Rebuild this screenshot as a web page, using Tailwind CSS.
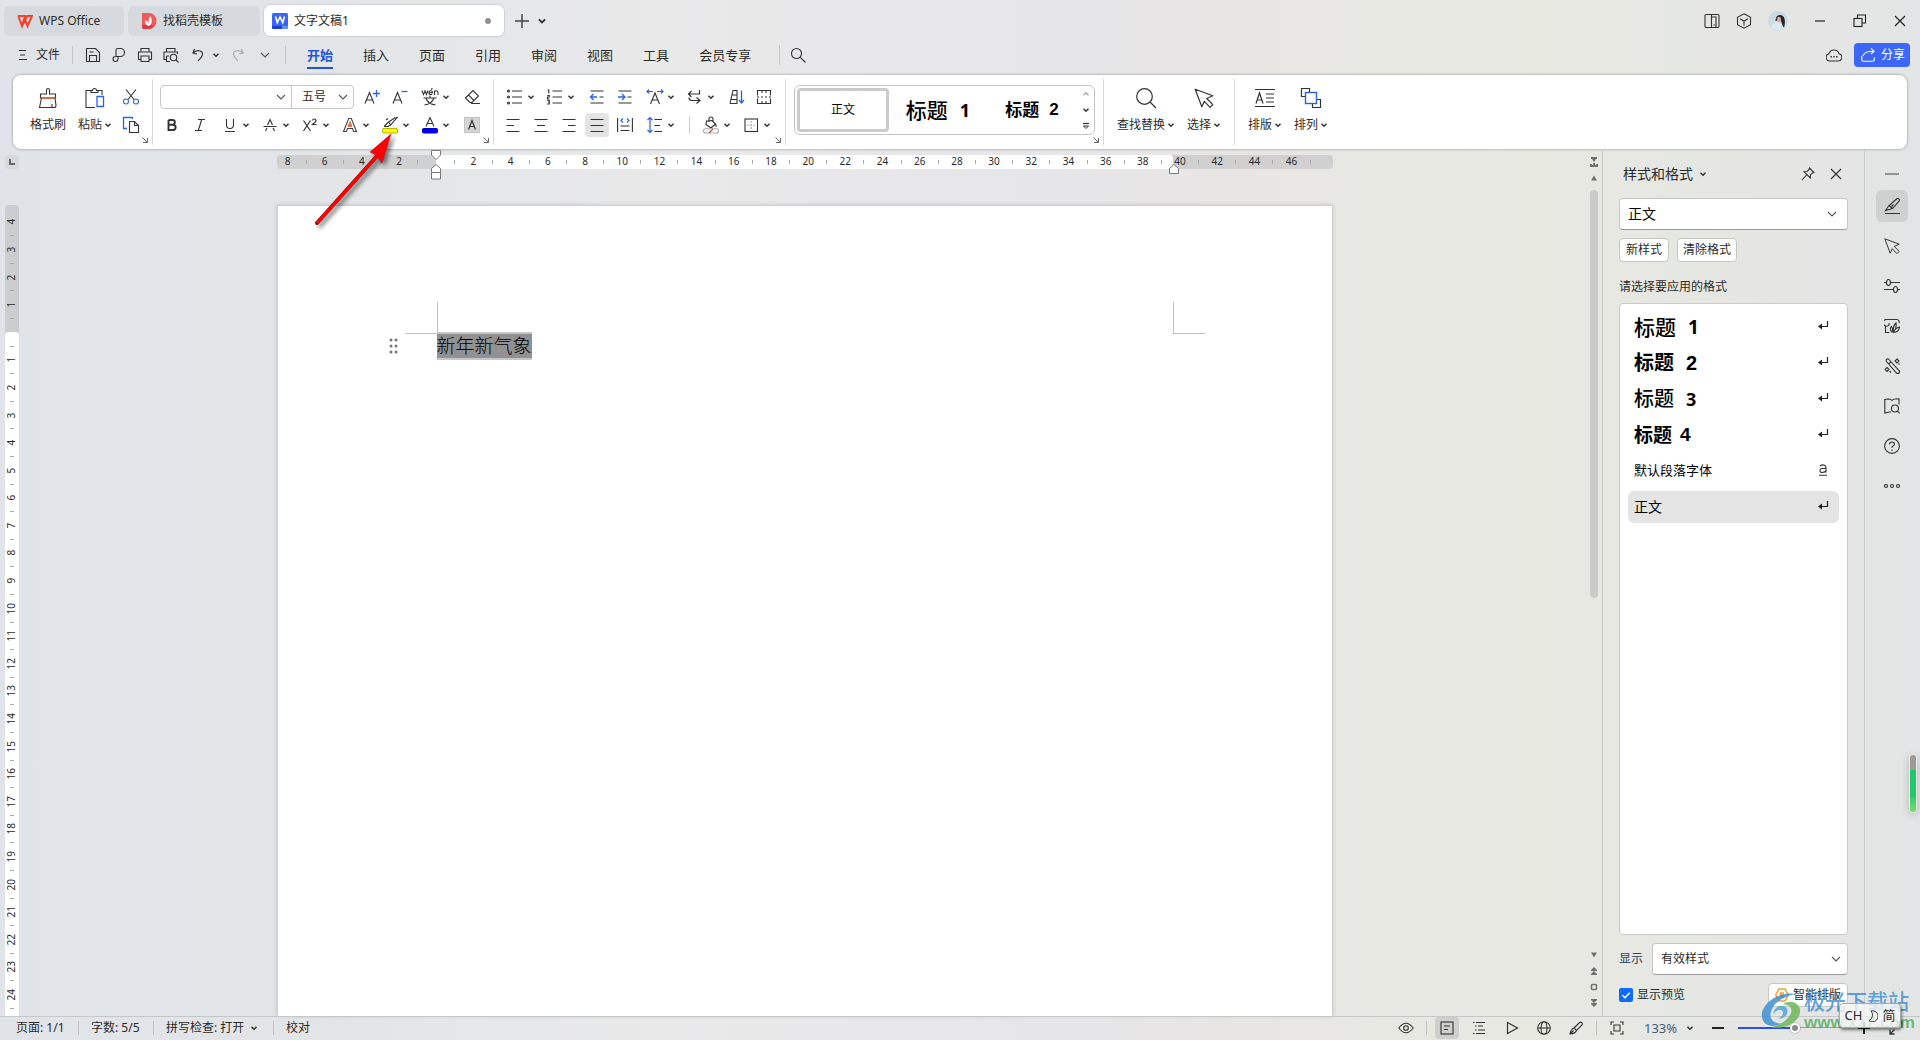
<!DOCTYPE html>
<html lang="zh-CN">
<head>
<meta charset="utf-8">
<meta name="viewport" content="width=device-width, initial-scale=1">
<title>文字文稿1 - WPS Office</title>
<script src="https://cdn.jsdelivr.net/npm/@tailwindcss/browser@4"></script>
</head>
<body class="relative flex h-screen flex-col overflow-hidden bg-[linear-gradient(90deg,#e0e4e9_0%,#e3e5e7_18%,#e9e9ea_35%,#e6e5e8_55%,#e8e6e4_65%,#e7e9e1_80%,#e5e6e3_92%,#e3e5e6_100%)] font-['Noto_Sans','Noto_Sans_CJK_SC',sans-serif] text-xs text-[#2b2b2b]">

<!-- Shared glyphs -->
<svg class="hidden">
  <symbol id="caret" viewBox="0 0 8 8"><path d="M1.5 2.7 4 5.2 6.5 2.7" fill="none" stroke="#333" stroke-width="1.5"/></symbol>
  <symbol id="chev" viewBox="0 0 12 12"><path d="M2 4 6 8 10 4" fill="none" stroke="#555" stroke-width="1.1"/></symbol>
  <symbol id="corner" viewBox="0 0 6 6"><path d="M.5 .5 5 5M5.5 1V5.5H1" fill="none" stroke="#666"/></symbol>
  <symbol id="ret" viewBox="0 0 12 12"><path d="M10.5 1V6.5H2" fill="none" stroke="#222" stroke-width="1.2"/><path d="M5 3.5V9.500L1 6.500Z" fill="#222"/></symbol>
  <symbol id="pointer" viewBox="0 0 20 20"><path d="M2 2 18 8 12.500 10.500 18 16 15.500 18.500 10.300 13 8 18Z" fill="none" stroke="#333" stroke-width="1.1" stroke-linejoin="round"/></symbol>
</svg>

<!-- Title bar -->
<header class="flex h-[37px] shrink-0 items-center pt-1 pl-1">
  <button class="flex h-[30px] w-[120px] items-center gap-1.5 rounded-md bg-[#d6d9dd] pl-[13px]">
    <svg class="size-4" viewBox="0 0 16 16" fill="none" stroke="#f0442e" stroke-width="2"><path d="M.8 3H8L5 13 1.500 3.500M5 13 10 3.500M8 6 10.500 13 15 3H9.500"/></svg>
    <span>WPS Office</span>
  </button>
  <button class="ml-1 flex h-[30px] w-[132px] items-center gap-1.5 rounded-md bg-[#d6d9dd] pl-[13px]">
    <svg class="size-4" viewBox="0 0 16 16"><path d="M1 0H8A7.500 8 0 0 1 8 16H3A2 2 0 0 1 1 14Z" fill="#f15a5a"/><path d="M1 12H13A7.500 8 0 0 1 8 16H3A2 2 0 0 1 1 14Z" fill="#dc3a44"/><path d="M8 13C4 12 4 9 4.300 7 6 8 7.500 9 8 12 7 8 7.500 5 9.500 3 11 6 12 11 8 13Z" fill="#fff"/></svg>
    <span>找稻壳模板</span>
  </button>
  <button class="ml-1 flex h-[31px] w-[240px] items-center gap-1.5 rounded-md bg-white pr-[13px] pl-2 shadow-[0_0_2px_rgba(0,0,0,0.3)]">
    <svg class="size-4" viewBox="0 0 16 16"><rect width="16" height="16" rx="1.500" fill="#3b63f5"/><path d="M0 13H10V16H1.500A1.500 1.500 0 0 1 0 14.500Z" fill="#1d3fd0"/><path d="M10 13H16V14.500A1.500 1.500 0 0 1 14.500 16H10Z" fill="#5f90ff"/><path d="M3.500 3.500 5.300 9.500 8 4 10.700 9.500 12.500 3.500" fill="none" stroke="#fff" stroke-width="1.600"/></svg>
    <span>文字文稿1</span>
    <span class="ml-auto size-1.5 rounded-full bg-[#909090]"></span>
  </button>
  <button class="ml-2.5 grid size-4 place-items-center" aria-label="新建"><svg class="size-4" viewBox="0 0 16 16"><path d="M8 1V15M1 8H15" stroke="#444" stroke-width="1.500"/></svg></button>
  <button class="ml-1 grid size-4 place-items-center" aria-label="更多"><svg class="size-2.5"><use href="#caret"/></svg></button>

  <div class="ml-auto flex items-center pr-3 text-[#333]">
    <button class="grid w-8 place-items-center" aria-label="侧栏"><svg class="size-4" viewBox="0 0 16 16" fill="none" stroke="#333" stroke-width="1.100"><rect x="1" y="1.500" width="14" height="13" rx="1.200"/><path d="M7.500 1.500V14.500M7.500 4H12V14.500M9.500 12H11"/></svg></button>
    <button class="grid w-8 place-items-center" aria-label="应用"><svg class="size-4" viewBox="0 0 16 16" fill="none" stroke="#333" stroke-width="1.100"><path d="M8 .8 14.500 4.300V11.700L8 15.200 1.500 11.700V4.300ZM4 5.700 8 8 12 5.700M8 8V12.500"/></svg></button>
    <button class="grid w-9 place-items-center" aria-label="账号"><svg class="size-5" viewBox="0 0 20 20"><circle cx="10" cy="10" r="10" fill="#c9dbe3"/><path d="M8 7C9 3.500 14 3 16 6.500 17.500 10 17 13 16 16.500 14 15 14 11 12.500 9Z" fill="#2a2229"/><path d="M9 6.500C11 5 13 6 13 8.500S10.500 12 9.500 10.500Z" fill="#d9a99c"/><path d="M2.500 16 8 10.500 13 13 14 18Q8 21 2.500 16Z" fill="#dfeaf0"/><path d="M7 9.500 9.500 5.500 9 10Z" fill="#3b3036"/></svg></button>
    <button class="ml-1 grid w-10 place-items-center" aria-label="最小化"><svg class="size-4" viewBox="0 0 16 16"><path d="M3 8H13" stroke="#222" stroke-width="1.200"/></svg></button>
    <button class="grid w-10 place-items-center" aria-label="还原"><svg class="size-4" viewBox="0 0 16 16" fill="none" stroke="#222" stroke-width="1.100"><rect x="2" y="5.500" width="8" height="8"/><path d="M5.500 5.500V2H13.500V10H10"/></svg></button>
    <button class="-mr-3 grid w-10 place-items-center" aria-label="关闭"><svg class="size-4" viewBox="0 0 16 16"><path d="M3 3 13 13M13 3 3 13" stroke="#222" stroke-width="1.200"/></svg></button>
  </div>
</header>

<!-- Menu row -->
<nav class="flex h-[38px] shrink-0 items-center pr-2.5 pb-0.5 pl-4">
  <button class="flex items-center gap-2"><svg class="size-3" viewBox="0 0 12 12"><path d="M3 1.500H10M4 6H9M3 10.500H11" stroke="#333"/></svg><span>文件</span></button>
  <span class="ml-3 h-[18px] w-px bg-[#c4c6c9]"></span>
  <div class="ml-[7px] flex items-center">
    <button class="grid w-[26px] place-items-center" aria-label="保存"><svg class="size-4" viewBox="0 0 16 16" fill="none" stroke="#333" stroke-width="1.100"><path d="M1.500 1.500H10.500L14.500 5.500V14.500H1.500ZM4.500 14.500V8.500H11.500V14.500M4.500 5H8.500"/></svg></button>
    <button class="grid w-[26px] place-items-center" aria-label="输出"><svg class="size-4" viewBox="0 0 16 16" fill="none" stroke="#333" stroke-width="1.100"><path d="M5 9.500V3.500A2 2 0 0 1 7 1.500H9.500A4 4 0 0 1 9.500 9.500H4.500A2.500 2.500 0 1 0 7 12V9.500"/></svg></button>
    <button class="grid w-[26px] place-items-center" aria-label="打印"><svg class="size-4" viewBox="0 0 16 16" fill="none" stroke="#333" stroke-width="1.100"><path d="M4 5V1.500H12V5M4 12.500H1.500V5H14.500V12.500H12M4 9H12V14.500H4Z"/></svg></button>
    <button class="grid w-[26px] place-items-center" aria-label="打印预览"><svg class="size-4" viewBox="0 0 16 16" fill="none" stroke="#333" stroke-width="1.100"><path d="M3.500 5V1.500H12V5M3 12.500H1V5H14.500V7M3.500 9V14.500H7M3.500 9H6"/><circle cx="10.500" cy="10.500" r="3.200"/><path d="M13 13 15.500 15.500"/></svg></button>
    <button class="grid w-7 place-items-center" aria-label="撤销"><svg class="size-3.5" viewBox="0 0 14 14" fill="none" stroke="#333" stroke-width="1.200"><path d="M3.500 1 2 5 6 6M2 5C6 1 12 2.500 11.500 6.500 11.200 9 9 10.500 7 13"/></svg></button>
    <button class="grid w-2 place-items-center" aria-label="撤销列表"><svg class="size-2"><use href="#caret"/></svg></button>
    <button class="ml-[5px] grid w-[26px] place-items-center" aria-label="恢复"><svg class="size-3.5" viewBox="0 0 14 14" fill="none" stroke="#a9acb0" stroke-width="1.200"><path d="M10.500 1 12 5 8 6M12 5C8 1 2 2.500 2.500 6.500 2.800 9 5 10.500 7 13"/></svg></button>
    <button class="grid w-7 place-items-center" aria-label="自定义"><svg class="size-3"><use href="#chev"/></svg></button>
    <span class="ml-1.5 h-[18px] w-px bg-[#c4c6c9]"></span>
  </div>
  <div class="ml-[21px] flex items-center gap-[30px] text-[13px] leading-5">
    <a href="#" class="relative font-bold text-[#2353dc]">开始<span class="absolute inset-x-0 -bottom-1 h-0.5 bg-[#2353dc]"></span></a>
    <a href="#">插入</a><a href="#">页面</a><a href="#">引用</a><a href="#">审阅</a><a href="#">视图</a><a href="#">工具</a><a href="#">会员专享</a>
  </div>
  <span class="ml-7 h-5 w-px bg-[#c4c6c9]"></span>
  <button class="ml-2.5 grid size-4 place-items-center" aria-label="搜索"><svg class="size-4" viewBox="0 0 16 16" fill="none" stroke="#333" stroke-width="1.100"><circle cx="6.500" cy="6.500" r="5"/><path d="M10.300 10.300 15.500 15.500"/></svg></button>
  <button class="mr-3 ml-auto grid place-items-center" aria-label="云同步"><svg class="size-4" viewBox="0 0 16 16" fill="none" stroke="#333" stroke-width="1.100"><path d="M4 14A3.700 3.700 0 0 1 3 6.700 5.200 5.200 0 0 1 13 6.700 3.700 3.700 0 0 1 12 14Z"/><path d="M4.500 9.800H6M7.300 9.800H8.700M10 9.800H11.500" stroke-width="1.600"/></svg></button>
  <button class="flex h-6 w-14 items-center gap-1.5 rounded bg-[#3d66fb] pl-[7px] text-white"><svg class="size-3.5" viewBox="0 0 14 14" fill="none" stroke="#fff" stroke-width="1.100"><path d="M.8 8V11.500A1.800 1.800 0 0 0 2.500 13.300H11.500A1.800 1.800 0 0 0 13.300 11.500V9.500M2 8C3 4.500 7 3 13 3.200M10 .5 13 3.200 10 6"/></svg>分享</button>
</nav>

<!-- Ribbon -->
<section class="mx-[13px] flex h-[74px] shrink-0 rounded-lg bg-white py-1 shadow-[0_0_3px_rgba(0,0,0,0.4)]">
  <div class="relative flex w-[140px] border-r border-[#d9d9d9] pl-2.5">
    <button class="flex w-[50px] flex-col items-center gap-1.5 pt-2"><svg class="size-[22px]" viewBox="0 0 22 22" fill="none" stroke="#333" stroke-width="1.100"><path d="M9.500 7V3A1.500 1.500 0 0 1 12.500 3V7H18.500V11H3.500V7ZM4.500 11 2.500 20.500H17A2 2 0 0 0 19 18.500L18 11M15 20.500V17"/><path d="M3.500 11H18.500" stroke="#d9612c" stroke-width="1.400"/></svg><span class="leading-5">格式刷</span></button>
    <button class="flex w-11 flex-col items-center gap-1.5 pt-2"><svg class="size-[22px]" viewBox="0 0 22 22" fill="none" stroke="#333" stroke-width="1.100"><path d="M7 3.500H2V20.500H11M14 3.500H18V8M7 5.500V3.500H8.500A2 2 0 0 1 12.500 3.500H14V5.500Z"/><path d="M13 9.500H19.500V19.500H13Z" stroke="#2d62e5" stroke-width="1.300"/></svg><span class="flex items-center gap-0.5 leading-5">粘贴<svg class="size-2"><use href="#caret"/></svg></span></button>
    <div class="flex w-7 flex-col items-center gap-1 pt-1.5">
      <button class="grid size-6 place-items-center" aria-label="剪切"><svg class="size-[18px]" viewBox="0 0 18 18" fill="none" stroke-width="1.100"><path d="M4 1.500 12 11.500M14 1.500 6 11.500" stroke="#333"/><circle cx="4" cy="13.500" r="2.500" stroke="#2d62e5"/><circle cx="14" cy="13.500" r="2.500" stroke="#2d62e5"/></svg></button>
      <button class="grid size-6 place-items-center" aria-label="复制"><svg class="size-[18px]" viewBox="0 0 18 18" fill="none" stroke-width="1.100"><path d="M5 12.500H1.500V1.500H10.500V3" stroke="#2d62e5" stroke-width="1.300"/><path d="M7.500 5.500H12.500L16.500 9.500V16.500H7.500ZM12.500 5.500V9.500H16.500" stroke="#333"/></svg></button>
    </div>
    <svg class="absolute right-1 bottom-0.5 size-1.5"><use href="#corner"/></svg>
  </div>

  <div class="relative flex w-[341px] flex-col gap-1 border-r border-[#d9d9d9] pt-1.5">
    <div class="flex items-center pl-[7px]">
      <div class="flex h-6 w-[194px] rounded border border-[#c6c6c6]">
        <label class="relative flex w-[131px] border-r border-[#c6c6c6]"><input aria-label="字体" class="w-full bg-transparent px-2 pr-5 outline-none"><svg class="absolute top-[5px] right-1 size-3"><use href="#chev"/></svg></label>
        <label class="relative flex flex-1"><select aria-label="字号" class="w-full appearance-none bg-transparent pl-2.5 leading-5 outline-none"><option>五号</option></select><svg class="pointer-events-none absolute top-[5px] right-1 size-3"><use href="#chev"/></svg></label>
      </div>
      <button class="ml-1 grid h-6 w-7 place-items-center" aria-label="增大字号"><svg class="size-4" viewBox="0 0 16 16" fill="none"><path d="M1 14.500 5.500 3.500 10 14.500M2.500 11H8.500" stroke="#333" stroke-width="1.100"/><path d="M9 4.500H16M12.500 1V8" stroke="#2d62e5" stroke-width="1.300"/></svg></button>
      <button class="grid h-6 w-7 place-items-center" aria-label="减小字号"><svg class="size-4" viewBox="0 0 16 16" fill="none"><path d="M1 14.500 5.500 3.500 10 14.500M2.500 11H8.500" stroke="#333" stroke-width="1.100"/><path d="M9.500 2.500H15.500" stroke="#2d62e5" stroke-width="1.300"/></svg></button>
      <button class="ml-1.5 flex h-6 w-10 items-center" aria-label="拼音指南"><svg class="h-[18px] w-5" viewBox="0 0 20 18" fill="none" stroke="#333" stroke-width="1.100"><path d="M2 2.500 3.500 6.500 5 3 6.500 6.500 8 2.500M9 4.700H12.500Q12.500 2.800 10.800 2.800T9 4.700 10.800 6.500L12.300 6.200M11 1.500 12.500 .3M14.500 7V2.500M14.500 4Q15 2.800 16.300 2.800T18 4.500V7M10 7.500V9.500M3.500 10H16.500M6 10C7 14 11 16.500 15.500 17M14 10C12.500 14 9 16.500 4.500 17"/></svg><svg class="ml-0.5 size-2"><use href="#caret"/></svg></button>
      <button class="grid size-6 place-items-center" aria-label="清除格式"><svg class="size-4" viewBox="0 0 16 16" fill="none" stroke="#333" stroke-width="1.100"><path d="M1.500 9 9 1.500 14.500 7 8 13.500H6ZM4.500 6 10 11.500M7 14.500H16"/></svg></button>
    </div>
    <div class="flex items-center pl-[5px]">
      <button class="grid h-6 w-7 place-items-center" aria-label="加粗"><svg class="size-3.5" viewBox="0 0 14 14" fill="none" stroke="#333" stroke-width="1.900"><path d="M3.500 2H7.500A2.300 2.300 0 0 1 7.500 6.700H3.500M3.500 6.700H8A2.600 2.600 0 0 1 8 12H3.500ZM3.500 2V12"/></svg></button>
      <button class="grid h-6 w-7 place-items-center" aria-label="倾斜"><svg class="size-3.5" viewBox="0 0 14 14" fill="none" stroke="#333" stroke-width="1.100"><path d="M5 1.500H12M2 12.500H9M8.700 1.500 5.300 12.500"/></svg></button>
      <button class="ml-1.5 flex h-6 w-10 items-center" aria-label="下划线"><svg class="h-4 w-5" viewBox="0 0 20 16" fill="none" stroke="#333" stroke-width="1.100"><path d="M6.500 2V8A3.500 3.500 0 0 0 13.500 8V2M5 14.500H15"/></svg><svg class="ml-0.5 size-2"><use href="#caret"/></svg></button>
      <button class="flex h-6 w-10 items-center" aria-label="删除线"><svg class="h-4 w-5" viewBox="0 0 20 16" fill="none" stroke="#333" stroke-width="1.100"><path d="M7.500 8 10 2.500 12.500 8M3.500 9.500H16.500M7 11 5.500 14M13 11 14.500 14"/></svg><svg class="ml-0.5 size-2"><use href="#caret"/></svg></button>
      <button class="flex h-6 w-10 items-center" aria-label="上标"><svg class="h-4 w-5" viewBox="0 0 20 16" fill="none" stroke="#333" stroke-width="1.200"><path d="M3.500 3.500 10.500 14M10.500 3.500 3.500 14M12.500 3.500Q12.700 2 14.300 2T16 3.500Q16 4.800 12.500 7.500H16.500"/></svg><svg class="ml-0.5 size-2"><use href="#caret"/></svg></button>
      <button class="flex h-6 w-10 items-center" aria-label="文字效果"><svg class="h-4 w-5" viewBox="0 0 20 16" fill="none"><path d="M3.500 14.500 8.700 1.500H11.300L16.500 14.500H13.500L12.500 11.500H7.500L6.500 14.500Z" stroke="#444" stroke-width="1.100"/><path d="M8 9.500 10 4.500 12 9.500Z" fill="#e2734a" stroke="#e2734a"/></svg><svg class="ml-0.5 size-2"><use href="#caret"/></svg></button>
      <button class="flex h-6 w-10 items-center" aria-label="突出显示"><svg class="h-[18px] w-5" viewBox="0 0 20 18" fill="none" stroke="#333" stroke-width="1.100"><path d="M4 10.500H8L10.500 9 17 1.500 14.500 2 8 6.500 4 10.500 8.500 6 11 9M6 4 8 2.500"/><rect x="2.500" y="12.500" width="15" height="4.500" rx="1.500" fill="#ff0" stroke="#b3b300"/></svg><svg class="ml-0.5 size-2"><use href="#caret"/></svg></button>
      <button class="flex h-6 w-10 items-center" aria-label="字体颜色"><svg class="h-[18px] w-5" viewBox="0 0 20 18" fill="none" stroke="#333" stroke-width="1.100"><path d="M6 10.500 10 1.500 14 10.500M7.500 7.500H12.500"/><rect x="2.500" y="12.500" width="15" height="4.500" rx="1.500" fill="#00f" stroke="#0000c0"/></svg><svg class="ml-0.5 size-2"><use href="#caret"/></svg></button>
      <button class="grid size-6 place-items-center" aria-label="字符底纹"><svg class="size-4" viewBox="0 0 16 16" fill="none"><rect x=".5" y=".5" width="15" height="15" fill="#d5d5d5" stroke="#c4c4c4"/><path d="M4.500 12.500 8 3.500 11.500 12.500M5.500 9.500H10.500" stroke="#333" stroke-width="1.200"/></svg></button>
    </div>
    <svg class="absolute right-1 bottom-0.5 size-1.5"><use href="#corner"/></svg>
  </div>

  <div class="relative flex w-[292px] flex-col gap-1 border-r border-[#d9d9d9] pt-1.5">
    <div class="flex items-center pl-[11px]">
      <button class="flex h-6 w-10 items-center" aria-label="项目符号"><svg class="h-4 w-5" viewBox="0 0 20 16" fill="none" stroke="#333" stroke-width="1.100"><path d="M7 2H17M7 8H17M7 14H17"/><circle cx="3.500" cy="2" r="1"/><circle cx="3.500" cy="8" r="1"/><circle cx="3.500" cy="14" r="1"/></svg><svg class="ml-0.5 size-2"><use href="#caret"/></svg></button>
      <button class="flex h-6 w-10 items-center" aria-label="编号"><svg class="h-4 w-5" viewBox="0 0 20 16" fill="none" stroke="#333" stroke-width="1.100"><path d="M7.500 2H17M7.500 8H17M7.500 14H17M2.500 1H3.800V4.500M2.300 6.500H4.300V8H2.500V10H4.500M2.300 11.500H4.300V15H2.300M3 13.200H4.300"/></svg><svg class="ml-0.5 size-2"><use href="#caret"/></svg></button>
      <button class="grid size-6 place-items-center" aria-label="减少缩进"><svg class="size-4" viewBox="0 0 16 16" fill="none" stroke="#333" stroke-width="1.100"><path d="M1.500 2H14.500M10.500 8H14.500M1.500 14H14.500"/><path d="M1.500 8H8M4.500 5 1.500 8 4.500 11" stroke="#2d62e5" stroke-width="1.300"/></svg></button>
      <button class="ml-1 grid size-6 place-items-center" aria-label="增加缩进"><svg class="size-4" viewBox="0 0 16 16" fill="none" stroke="#333" stroke-width="1.100"><path d="M1.500 2H14.500M10.500 8H14.500M1.500 14H14.500"/><path d="M1 8H8M5 5 8 8 5 11" stroke="#2d62e5" stroke-width="1.300"/></svg></button>
      <button class="ml-2 flex h-6 w-10 items-center" aria-label="中文版式"><svg class="h-4 w-5" viewBox="0 0 20 16" fill="none" stroke="#333" stroke-width="1.100"><path d="M5.500 15 10 4 14.500 15M7 11H13"/><path d="M2 2.500H8M12 2.500H18M4 .5 2 2.500 4 4.500M16 .5 18 2.500 16 4.500" stroke="#2d62e5" stroke-width="1.200"/></svg><svg class="ml-0.5 size-2"><use href="#caret"/></svg></button>
      <button class="flex h-6 w-10 items-center" aria-label="换行"><svg class="h-4 w-5" viewBox="0 0 20 16" fill="none" stroke="#333" stroke-width="1.200"><path d="M14.500 1V5H4M6.500 2 3.500 5 6.500 8M4 8.500Q4 11.500 7 11.500H14.500M11.500 8.500 15 11.500 11.500 14.500"/></svg><svg class="ml-0.5 size-2"><use href="#caret"/></svg></button>
      <button class="grid size-6 place-items-center" aria-label="排序"><svg class="size-4" viewBox="0 0 16 16" fill="none" stroke="#333" stroke-width="1.100"><path d="M1 14.500 4 1.500H8V14.500H1M2.500 10.500H8M3.500 6H8"/><path d="M12.500 1.500V14M10 11 12.500 14 15 11" stroke="#2d62e5" stroke-width="1.300"/></svg></button>
      <button class="ml-[3px] grid size-6 place-items-center" aria-label="显示标记"><svg class="size-4" viewBox="0 0 16 16" fill="none" stroke="#333" stroke-width="1.100"><path d="M1.500 6.500V1.500H14.500V6.500M1.500 9.500V14.500H14.500V9.500M6 1.500V4M10 1.500V4M6 14.500V12M10 14.500V12M1 8H3M5 8H7M9 8H11M13 8H15"/></svg></button>
    </div>
    <div class="flex items-center pl-[7px]">
      <button class="grid size-6 place-items-center" aria-label="左对齐"><svg class="size-4" viewBox="0 0 16 16"><path d="M1.500 2.500H14.500M1.500 8.500H9M1.500 14.500H14.500" stroke="#333" stroke-width="1.100"/></svg></button>
      <button class="ml-1 grid size-6 place-items-center" aria-label="居中"><svg class="size-4" viewBox="0 0 16 16"><path d="M1.500 2.500H14.500M4 8.500H12M1.500 14.500H14.500" stroke="#333" stroke-width="1.100"/></svg></button>
      <button class="ml-1 grid size-6 place-items-center" aria-label="右对齐"><svg class="size-4" viewBox="0 0 16 16"><path d="M1.500 2.500H14.500M7 8.500H14.500M1.500 14.500H14.500" stroke="#333" stroke-width="1.100"/></svg></button>
      <button class="ml-1 grid size-6 place-items-center rounded bg-[#e4e4e4]" aria-label="两端对齐"><svg class="size-4" viewBox="0 0 16 16"><path d="M1.500 2.500H14.500M1.500 8.500H14.500M1.500 14.500H14.500" stroke="#333" stroke-width="1.100"/></svg></button>
      <button class="ml-1 grid size-6 place-items-center" aria-label="分散对齐"><svg class="size-4" viewBox="0 0 16 16" fill="none" stroke="#333" stroke-width="1.100"><path d="M.6 1V15M15.400 1V15M3.500 9H12.500M3.500 13.500H12.500"/><path d="M6 1.500 4 3.500 6 5.500M10 1.500 12 3.500 10 5.500" stroke="#2d62e5" stroke-width="1.200"/></svg></button>
      <button class="ml-2 flex h-6 w-10 items-center" aria-label="行距"><svg class="h-[18px] w-5" viewBox="0 0 20 18" fill="none" stroke="#333" stroke-width="1.100"><path d="M9.500 3.500H17M9.500 9.500H15M9.500 15.500H17"/><path d="M5 1.500V16.500M2.500 4 5 1.500 7.500 4M2.500 14 5 16.500 7.500 14" stroke="#2d62e5" stroke-width="1.200"/></svg><svg class="ml-0.5 size-2"><use href="#caret"/></svg></button>
      <span class="ml-1 h-[18px] w-px bg-[#d0d0d0]"></span>
      <button class="ml-[11px] flex h-6 w-10 items-center" aria-label="底纹"><svg class="h-[18px] w-5" viewBox="0 0 20 18" fill="none" stroke="#333" stroke-width="1.100"><path d="M5.500 5 11 4.500 14.500 8 10 12 5 8.500ZM8 6V3A2 2 0 0 1 12 3V5.500M15 8.500V11"/><rect x="2.500" y="12.800" width="15" height="4.200" rx="2" stroke="#aaa" fill="#fff"/><path d="M8 17 12 13" stroke="#e33"/></svg><svg class="ml-0.5 size-2"><use href="#caret"/></svg></button>
      <button class="flex h-6 w-9 items-center" aria-label="边框"><svg class="h-4 w-5" viewBox="0 0 20 16" fill="none" stroke="#333" stroke-width="1.100"><rect x="4" y="2" width="12.500" height="12.500"/><path d="M10.200 4V13M6 8.200H15" stroke="#aaa" stroke-dasharray="2 1"/></svg><svg class="ml-0.5 size-2"><use href="#caret"/></svg></button>
    </div>
    <svg class="absolute right-1 bottom-0.5 size-1.5"><use href="#corner"/></svg>
  </div>

  <div class="relative w-[318px] border-r border-[#d9d9d9] pt-1.5 pl-2">
    <div class="flex h-[50px] w-[301px] items-center rounded-md border border-[#c4c4c4] text-black">
      <button class="ml-0.5 h-11 w-[92px] rounded-sm border-[3px] border-[#cbcbcb]">正文</button>
      <button class="flex w-[98px] items-center justify-center gap-3 text-[21px] leading-7 font-medium"><span>标题</span><b class="text-[18px]">1</b></button>
      <button class="flex w-[90px] items-center justify-center gap-2.5 text-[17px] leading-6 font-bold"><span>标题</span><span class="font-['Liberation_Sans']">2</span></button>
      <div class="flex flex-1 flex-col items-center gap-2">
        <svg class="size-2 rotate-180 opacity-40"><use href="#caret"/></svg>
        <svg class="size-2"><use href="#caret"/></svg>
        <svg class="size-2" viewBox="0 0 8 8"><path d="M1 1.500H7" stroke="#333" stroke-width="1.200"/><path d="M1.500 4 4 6.500 6.500 4Z" fill="#fff" stroke="#333"/></svg>
      </div>
    </div>
    <svg class="absolute right-1 bottom-0.5 size-1.5"><use href="#corner"/></svg>
  </div>

  <div class="flex w-[131px] border-r border-[#d9d9d9] pl-3">
    <button class="flex w-[60px] flex-col items-center gap-1.5 pt-2"><svg class="size-[22px]" viewBox="0 0 22 22" fill="none" stroke="#333" stroke-width="1.200"><circle cx="9.500" cy="9.500" r="7.800"/><path d="M15 15 21 21"/></svg><span class="flex items-center gap-0.5 leading-5 whitespace-nowrap">查找替换<svg class="size-2"><use href="#caret"/></svg></span></button>
    <button class="ml-2 flex w-10 flex-col items-center gap-1.5 pt-2"><svg class="size-[22px]"><use href="#pointer"/></svg><span class="flex items-center gap-0.5 leading-5">选择<svg class="size-2"><use href="#caret"/></svg></span></button>
  </div>
  <div class="flex pl-2.5">
    <button class="flex w-10 flex-col items-center gap-1.5 pt-2"><svg class="size-[22px]" viewBox="0 0 22 22" fill="none" stroke="#333" stroke-width="1.200"><path d="M1 2.500H21M1 19.500H21M2 16.500 5.500 6 9 16.500M3.200 13H7.800M12 7H20M12 11H20M12 15H20"/></svg><span class="flex items-center gap-0.5 leading-5">排版<svg class="size-2"><use href="#caret"/></svg></span></button>
    <button class="ml-1.5 flex w-10 flex-col items-center gap-1.5 pt-2"><svg class="size-[22px]" viewBox="0 0 22 22" fill="none" stroke="#333" stroke-width="1.200"><path d="M5 9.500H1.500V1.500H9.500V5M12.500 16V20.500H20.500V12.500H17"/><rect x="5.500" y="5.500" width="11" height="11" stroke="#2d62e5" stroke-width="1.400"/></svg><span class="flex items-center gap-0.5 leading-5">排列<svg class="size-2"><use href="#caret"/></svg></span></button>
  </div>
</section>

<main class="flex min-h-0 flex-1">
  <!-- Vertical ruler -->
  <div class="ml-[5px] flex w-3.5 flex-col pt-1.5 text-[10px]">
    <div class="grid h-3.5 shrink-0 place-items-center rounded-sm bg-[#d6d8da]"><svg class="size-2" viewBox="0 0 8 8"><path d="M2 1V6H7" fill="none" stroke="#666" stroke-width="2"/></svg></div>
    <div class="relative mt-9 flex flex-1 flex-col rounded-t bg-[#cbcecf]">
      <div class="mt-[127px] flex-1 rounded-t bg-white"></div>
      <div id="vruler" class="absolute inset-x-0 top-[17px] bottom-[7px] flex flex-col items-center justify-between"></div>
    </div>
  </div>

  <!-- Document -->
  <div class="flex min-w-0 flex-1 flex-col items-center pt-1.5">
    <div class="relative flex h-3.5 w-[1056px] shrink-0 rounded bg-[#d0d0d0] text-[10px]">
      <div class="mr-[160px] ml-[159px] flex-1 rounded-sm bg-white"></div>
      <div id="hruler" class="absolute inset-y-0 right-[22px] left-[11px] flex items-center justify-between"></div>
      <svg class="absolute -top-[5px] left-[153px] h-[30px] w-3" viewBox="0 0 12 30" fill="#fff" stroke="#777"><path d="M1.500 .5H10.500V5L6 9.500 1.500 5ZM6 14.500 10.500 18.500V22.500H1.500V18.500ZM1.500 22.500H10.500V29H1.500Z"/></svg>
      <svg class="absolute top-2 right-[153px] h-3 w-3" viewBox="0 0 12 12" fill="#fff" stroke="#777"><path d="M6 1.500 10.500 5.500V10.500H1.500V5.500Z"/></svg>
    </div>
    <article class="mt-9 w-[1056px] flex-1 border border-b-0 border-[#cfcfcf] bg-white px-[127px] pt-[96px] shadow-[0_0_4px_rgba(0,0,0,0.15)]">
      <div class="flex justify-between">
        <div class="h-8 w-[33px] border-r border-b border-[#bfbfbf]"></div>
        <div class="h-8 w-8 border-b border-l border-[#bfbfbf]"></div>
      </div>
      <div class="-mt-0.5 -ml-4 flex items-center">
        <svg class="size-4" viewBox="0 0 16 16" fill="#777"><circle cx="2" cy="2" r="1.500"/><circle cx="7" cy="2" r="1.500"/><circle cx="2" cy="8" r="1.500"/><circle cx="7" cy="8" r="1.500"/><circle cx="2" cy="14" r="1.500"/><circle cx="7" cy="14" r="1.500"/></svg>
        <p class="ml-8 border-y-2 border-[#c6c6c6] bg-[#919191] text-[19px] leading-6 font-light text-black">新年新气象</p>
      </div>
    </article>
  </div>

  <!-- Scrollbar -->
  <div class="flex w-3 flex-col items-start pt-2">
    <svg class="h-[10px] w-2" viewBox="0 0 8 10" fill="#707070"><path d="M1 0H7V2H6L4 5 2 2H1ZM0 7H2V8H3V6H5V8H6V7H8V10H0Z"/></svg>
    <svg class="mt-[7px] size-2" viewBox="0 0 8 8" fill="#707070"><path d="M4 1.500 7 6.500H1Z"/></svg>
    <div class="mt-2 h-[408px] w-2 rounded-full bg-[#cbccc8]"></div>
    <div class="mt-auto mb-[9px] flex flex-col gap-2">
      <svg class="size-2" viewBox="0 0 8 8" fill="#707070"><path d="M1 1.500H7L4 6.500Z"/></svg>
      <svg class="size-2" viewBox="0 0 8 8" fill="#707070"><path d="M4 0 7 3H1ZM4 4 7 7H1ZM1 3H7V4H1ZM1 7H7V8H1Z"/></svg>
      <svg class="size-2" viewBox="0 0 8 8" fill="none" stroke="#707070" stroke-width="1.500"><rect x="1.500" y="1.500" width="5" height="5" rx="1"/></svg>
      <svg class="size-2" viewBox="0 0 8 8" fill="#707070"><path d="M4 8 7 5H1ZM4 4 7 1H1ZM1 4H7V5H1ZM1 0H7V1H1Z"/></svg>
    </div>
  </div>

  <!-- Styles panel -->
  <aside class="flex w-[263px] flex-col border-x border-[#c9cbc9] px-4 pb-[9px]">
    <div class="flex h-[49px] items-center pl-1 text-sm">样式和格式
      <svg class="ml-1.5 size-2"><use href="#caret"/></svg>
      <button class="ml-auto" aria-label="固定"><svg class="size-3.5" viewBox="0 0 14 14" fill="none" stroke="#333" stroke-width="1.100"><path d="M8.500 1 13 5.500 11 6.200 9.500 8 9.300 11 3 4.700 6 4.500 7.800 3ZM5.500 8 1 13"/></svg></button>
      <button class="mr-[5px] ml-3.5" aria-label="关闭窗格"><svg class="size-3.5" viewBox="0 0 14 14"><path d="M2 2 12 12M12 2 2 12" stroke="#333" stroke-width="1.100"/></svg></button>
    </div>
    <label class="relative flex"><select aria-label="当前样式" class="h-8 w-full appearance-none rounded border border-[#c6c8c4] border-b-[#9a9a9a] bg-white pl-2 text-sm leading-7 text-black outline-none"><option>正文</option></select><svg class="pointer-events-none absolute top-2.5 right-2.5 size-3"><use href="#chev"/></svg></label>
    <div class="mt-2 flex gap-2">
      <button class="h-6 w-[50px] rounded border border-[#c6c8c4] bg-white">新样式</button>
      <button class="h-6 w-[60px] rounded border border-[#c6c8c4] bg-white">清除格式</button>
    </div>
    <p class="mt-[15px] leading-5">请选择要应用的格式</p>
    <ul class="mt-1.5 min-h-0 flex-1 overflow-hidden rounded border border-[#c9cbc7] bg-white px-2 pt-[5px] text-black">
      <li class="flex h-9 items-center gap-3 px-1.5 text-[21px] leading-8 font-medium">标题<b class="text-[19px]">1</b><svg class="mr-1 mb-0.5 ml-auto size-3"><use href="#ret"/></svg></li>
      <li class="flex h-9 items-center gap-3 px-1.5 text-[20px] leading-8 font-bold">标题<span class="font-['Liberation_Sans']">2</span><svg class="mr-1 mb-0.5 ml-auto size-3"><use href="#ret"/></svg></li>
      <li class="flex h-9 items-center gap-3 px-1.5 text-[20px] leading-8 font-medium">标题<b class="text-[18px]">3</b><svg class="mr-1 mb-0.5 ml-auto size-3"><use href="#ret"/></svg></li>
      <li class="flex h-9 items-center gap-2 px-1.5 text-[19px] leading-8 font-bold">标题<span class="font-['Liberation_Sans']">4</span><svg class="mr-1 mb-0.5 ml-auto size-3"><use href="#ret"/></svg></li>
      <li class="flex h-9 items-center px-1.5 text-[13px]">默认段落字体<svg class="mr-1 mb-0.5 ml-auto size-3" viewBox="0 0 12 12" fill="none" stroke="#333" stroke-width="1.100"><path d="M3 2Q5 .3 7.500 1.200 9 2 9 4V8.500M9 4.500H5Q3 4.500 3 6.500T5 8.500 9 7M2 11.300H10"/></svg></li>
      <li class="mt-0.5 flex h-8 items-center rounded-md bg-[#e4e4e4] px-1.5 text-sm">正文<svg class="mr-1 mb-0.5 ml-auto size-3"><use href="#ret"/></svg></li>
    </ul>
    <div class="mt-2 flex items-center justify-between">
      <label for="show" class="text-[#35425a]">显示</label>
      <span class="relative flex"><select id="show" class="h-8 w-[196px] appearance-none rounded border border-[#c6c8c4] border-b-[#9a9a9a] bg-white pl-2 leading-7 outline-none"><option>有效样式</option></select><svg class="pointer-events-none absolute top-2.5 right-1.5 size-3"><use href="#chev"/></svg></span>
    </div>
    <div class="mt-2 flex items-center">
      <label class="flex items-center gap-1"><span class="relative flex"><input type="checkbox" checked class="size-3.5 appearance-none rounded-xs bg-[#0b6cff]"><svg class="absolute inset-0 size-3.5" viewBox="0 0 14 14"><path d="M3.500 7.300 6 9.700 10.700 4.800" fill="none" stroke="#fff" stroke-width="1.500"/></svg></span>显示预览</label>
      <button class="ml-auto flex h-6 w-20 items-center gap-1 rounded border border-[#c6c8c4] bg-white pl-1.5"><svg class="size-3.5" viewBox="0 0 14 14" fill="none" stroke="#f0a030" stroke-width="1.500"><path d="M4 1H10L13.300 7 10 13H4L.7 7ZM9 5H5.500V7H8.500V9H5"/></svg>智能排版</button>
    </div>
  </aside>

  <!-- Tool strip -->
  <div class="flex w-[55px] flex-col items-center gap-2 pt-[17px] pr-0.5">
    <button class="grid h-4 w-8 place-items-center" aria-label="收起"><svg class="size-4" viewBox="0 0 16 16"><path d="M1 8H15" stroke="#777" stroke-width="1.500"/></svg></button>
    <button class="grid h-8 w-8 place-items-center rounded-md bg-[#cfd0d0]" aria-label="样式"><svg class="size-4" viewBox="0 0 16 16" fill="none" stroke="#333" stroke-width="1.100"><path d="M1.500 12.500 5 7.500 12.500 1A1.600 1.600 0 0 1 15 3.200L8.500 10.500ZM5 7.500 8.500 10.500M7.500 8.500 9.500 6.500M1 15.500H16"/></svg></button>
    <button class="grid h-8 w-8 place-items-center" aria-label="选择"><svg class="size-[18px]"><use href="#pointer"/></svg></button>
    <button class="grid h-8 w-8 place-items-center" aria-label="设置"><svg class="size-4" viewBox="0 0 16 16" fill="none" stroke="#333" stroke-width="1.100"><path d="M0 4.500H2.500M6.500 4.500H16M0 11.500H9.500M13.500 11.500H16"/><ellipse cx="4.500" cy="4.500" rx="2" ry="3"/><ellipse cx="11.500" cy="11.500" rx="2" ry="3"/></svg></button>
    <button class="grid h-8 w-8 place-items-center" aria-label="图库"><svg class="size-4" viewBox="0 0 16 16" fill="none" stroke="#333" stroke-width="1.100"><path d="M5.500 14.500H1.500V8A3.500 3.500 0 0 1 1.500 1.500H13A2.500 2.500 0 0 1 15 5M1.500 8A2.500 2.500 0 0 0 5 5M8 14Q5 11 7.500 8.500 9.500 11 8 14ZM9.500 14Q8.500 8 12 5 13 10 9.500 14ZM9.500 14.500Q11 10 15.500 9 15 14 9.500 14.500Z"/></svg></button>
    <button class="grid h-8 w-8 place-items-center" aria-label="智能工具"><svg class="size-4" viewBox="0 0 16 16" fill="none" stroke="#333" stroke-width="1.100"><path d="M2.500 3.500A1.500 1.500 0 0 1 5 1.500L15 12.500A1.500 1.500 0 0 1 12.500 15ZM4.500 6 7 4M13 1 15 3 13 5 11 3ZM3 9.500 5 11.500 3 13.500 1 11.500ZM5.500 13 7 14.500M14.500 5.500 15.500 6.500"/></svg></button>
    <button class="grid h-8 w-8 place-items-center" aria-label="查找"><svg class="size-4" viewBox="0 0 16 16" fill="none" stroke="#333" stroke-width="1.100"><path d="M7 14H5.500L.8 15V1.500L5 1Q7 1 8 2.500 9 1 11 1L15 .8V6.500"/><circle cx="11" cy="10.500" r="3.500"/><path d="M13.500 13 15.800 15.500"/></svg></button>
    <button class="grid h-8 w-8 place-items-center" aria-label="帮助"><svg class="size-4" viewBox="0 0 16 16" fill="none" stroke="#333" stroke-width="1.100"><circle cx="8" cy="8" r="7.400"/><path d="M5.500 6.500Q5.500 4 8 4T10.500 6.200Q10.500 7.500 8 8.800V10M8 11.500V13"/></svg></button>
    <button class="grid h-8 w-8 place-items-center" aria-label="更多工具"><svg class="size-4" viewBox="0 0 16 16" fill="none" stroke="#333" stroke-width="1.100"><circle cx="2" cy="8" r="1.500"/><circle cx="8" cy="8" r="1.500"/><circle cx="14" cy="8" r="1.500"/></svg></button>
  </div>
</main>

<!-- Status bar -->
<footer class="flex h-6 shrink-0 items-center border-t border-[#c6c8c8] pb-0.5 pl-4 leading-5">
  <span class="w-[62px]">页面: 1/1</span><span class="h-3.5 w-px bg-[#c0c2c4]"></span>
  <span class="ml-3 w-[62px]">字数: 5/5</span><span class="h-3.5 w-px bg-[#c0c2c4]"></span>
  <button class="ml-3 flex w-[107px] items-center gap-1.5">拼写检查: 打开<svg class="size-2"><use href="#caret"/></svg></button><span class="h-3.5 w-px bg-[#c0c2c4]"></span>
  <span class="ml-3">校对</span>
  <div class="ml-auto flex items-center pr-4">
    <button class="grid w-4 place-items-center" aria-label="护眼"><svg class="size-4" viewBox="0 0 16 16" fill="none" stroke="#333" stroke-width="1.100"><path d="M.8 8Q8-1.500 15.200 8 8 17.500 .8 8Z"/><circle cx="8" cy="8" r="2.300"/></svg></button>
    <span class="ml-3 h-3.5 w-px bg-[#c0c2c4]"></span>
    <button class="ml-2 grid h-[22px] w-6 place-items-center rounded bg-[#cfd0cd]" aria-label="页面视图"><svg class="size-3.5" viewBox="0 0 14 14" fill="none" stroke="#333" stroke-width="1.100"><rect x="1" y="1" width="12" height="12"/><path d="M4 5H10M4 8.500H8"/></svg></button>
    <button class="ml-3 grid w-4 place-items-center" aria-label="大纲"><svg class="size-3.5" viewBox="0 0 14 14"><path d="M1 1.500H2.500M4 1.500H13M3 5H4.500M6 5H11M3 9H4.500M6 9H13M1 12.500H2.500M4 12.500H13" stroke="#333" stroke-width="1.100"/></svg></button>
    <button class="ml-[17px] grid w-4 place-items-center" aria-label="阅读"><svg class="size-3.5" viewBox="0 0 14 14"><path d="M2.500 1.500 12.500 7 2.500 12.500Z" fill="none" stroke="#333" stroke-width="1.200"/></svg></button>
    <button class="ml-4 grid w-4 place-items-center" aria-label="Web"><svg class="size-3.5" viewBox="0 0 14 14" fill="none" stroke="#333" stroke-width="1.100"><circle cx="7" cy="7" r="6.300"/><ellipse cx="7" cy="7" rx="3" ry="6.300"/><path d="M.7 7H13.300"/></svg></button>
    <button class="ml-4 grid w-4 place-items-center" aria-label="批注"><svg class="size-3.5" viewBox="0 0 14 14" fill="none" stroke="#333" stroke-width="1.100"><path d="M5 7 10.500 1.500A1.800 1.800 0 0 1 13 4L7.500 9.500ZM5 7Q2 8 1 13 6.500 12.500 7.500 9.500M1 13 4.500 9.500"/></svg></button>
    <span class="ml-3 h-3.5 w-px bg-[#c0c2c4]"></span>
    <button class="ml-3 grid w-4 place-items-center" aria-label="适应"><svg class="size-3.5" viewBox="0 0 14 14" fill="none" stroke="#333" stroke-width="1.100"><path d="M1 4V1H4M10 1H13V4M13 10V13H10M4 13H1V10M4 4H10V10H4Z"/></svg></button>
    <span class="ml-[19px] w-9 text-[13px] text-[#4a5a78]">133%</span>
    <svg class="ml-1.5 size-2"><use href="#caret"/></svg>
    <button class="ml-4 grid w-4 place-items-center" aria-label="缩小"><svg class="size-3" viewBox="0 0 12 12"><path d="M0 6H12" stroke="#222" stroke-width="2"/></svg></button>
    <label class="relative ml-3 flex h-4 w-[114px] items-center"><input type="range" aria-label="缩放" value="50" class="absolute inset-0 w-full opacity-0"><span class="h-0.5 w-1/2 bg-[#2a4fe6]"></span><span class="h-px flex-1 bg-[#9a9a9a]"></span><span class="absolute left-[52px] grid size-2.5 place-items-center rounded-full bg-white shadow-[0_0_2px_rgba(0,0,0,0.4)]"><span class="size-1.5 rounded-full bg-[#888]"></span></span></label>
    <button class="ml-1 grid w-4 place-items-center" aria-label="放大"><svg class="size-3" viewBox="0 0 12 12"><path d="M0 6H12M6 0V12" stroke="#222" stroke-width="2"/></svg></button>
    <button class="ml-4 grid w-4 place-items-center" aria-label="全屏"><svg class="size-3.5" viewBox="0 0 14 14" fill="none" stroke="#333" stroke-width="1.300"><path d="M8.500 1H13V5.500M13 1 8.500 5.500M5.500 13H1V8.500M1 13 5.500 8.500"/></svg></button>
  </div>
</footer>

<!-- Pointer arrow over the page -->
<svg class="pointer-events-none absolute top-[130px] left-[310px] h-[104px] w-[96px] drop-shadow-[3px_3px_2px_rgba(0,0,0,0.5)]" viewBox="0 0 96 104"><path d="M7 93 67 26" stroke="#8a1010" stroke-width="4" stroke-linecap="round"/><path d="M7 93 67 26" stroke="#f00" stroke-width="3"/><path d="M81 4 60 22 66 25 72 33Z" fill="#f00" stroke="#c01010" stroke-width=".6"/></svg>

<!-- Side meter -->
<div class="absolute top-[754px] right-[3px] flex h-[59px] w-2 flex-col overflow-hidden rounded-full border border-white/80 bg-[#9d9b97] shadow-[0_2px_8px_rgba(0,0,0,0.2)]"><div class="mt-[15px] flex-1 bg-linear-to-b from-[#22c96b] from-60% to-[#6fe36a]"></div></div>

<!-- Site mark, with the input method badge on top -->
<div class="pointer-events-none absolute right-[11px] bottom-1.5 flex items-center gap-0.5 whitespace-nowrap">
  <svg class="h-[40px] w-[42px]" viewBox="0 0 44 42"><path d="M36 2C18-1 0 14 2 26 3 36 15 38 22 33 12 33 9 26 12 19 15 11 24 5 36 2Z" fill="#3f8fd2" fill-opacity=".85"/><path d="M12 37C26 40 43 31 42 19 41 10 30 8 24 13 33 13 35 19 31 25 27 31 20 35 12 37Z" fill="#6db65b" fill-opacity=".85"/><path d="M14 24C14 16 22 12 27 16 32 21 26 29 19 28 24 26 26 21 22 19 18 18 15 21 14 24Z" fill="#58a7dc" fill-opacity=".9"/></svg>
  <div class="flex w-[105px] flex-col leading-[22px]">
    <span class="text-[21px] font-medium text-[#3b8bd0]/80">极光下载站</span>
    <span class="font-['Liberation_Sans'] text-[17px] font-bold text-[#4cae5c]/80">www.xz7.com</span>
  </div>
</div>
<div class="absolute right-[19px] bottom-3 flex h-[25px] w-[62px] items-center justify-center gap-1 rounded-sm border border-[#aaa] bg-[#f8f8f8]/80 text-[13px] shadow-[1px_2px_3px_rgba(0,0,0,0.5)]">CH<svg class="size-3" viewBox="0 0 12 12"><path d="M5 1A5.500 5.500 0 1 1 3 10.500 6 6 0 0 0 5 1Z" fill="none" stroke="#333"/></svg>简</div>

<script>
  // Ruler marks: each item is a zero-size box, so the marks spread evenly whatever their label width.
  const h = document.getElementById('hruler');
  for (let i = -8; i <= 47; i++) {
    const mark = document.createElement('span');
    mark.className = 'flex w-0 shrink-0 justify-center';
    if (i % 2) mark.innerHTML = '<i class="h-1 w-px shrink-0 bg-[#aaa]"></i>';
    else if (i) mark.textContent = Math.abs(i);
    h.append(mark);
  }
  const v = document.getElementById('vruler');
  for (let i = -8; i <= 49; i++) {
    const mark = document.createElement('span');
    mark.className = 'flex h-0 shrink-0 items-center';
    if (i % 2) mark.innerHTML = '<i class="h-px w-1 bg-[#aaa]"></i>';
    else if (i) mark.innerHTML = '<b class="-rotate-90 font-normal">' + Math.abs(i / 2) + '</b>';
    v.append(mark);
  }
</script>
</body>
</html>
